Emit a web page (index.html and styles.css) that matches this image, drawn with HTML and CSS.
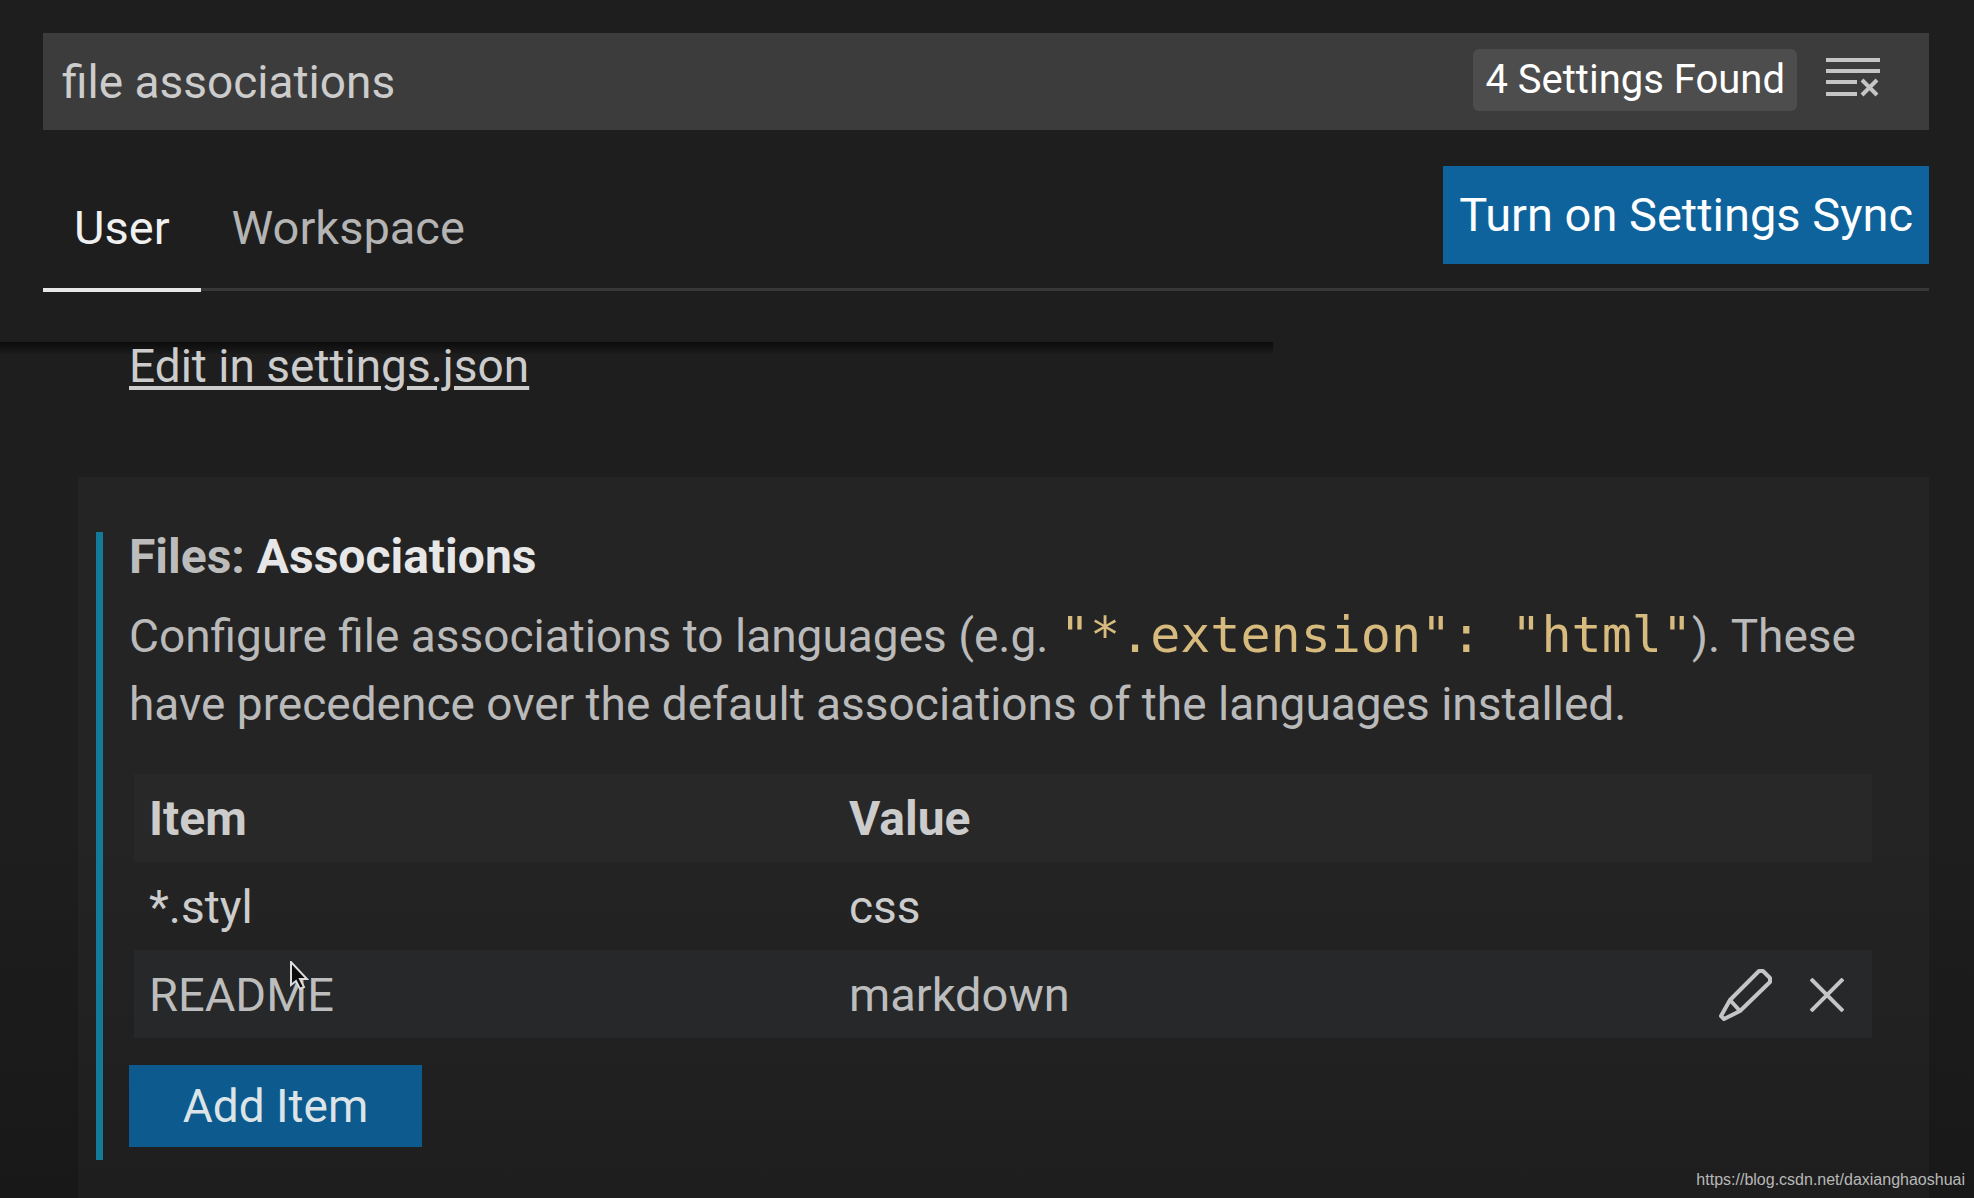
FILE: index.html
```html
<!DOCTYPE html>
<html lang="en">
<head>
<meta charset="utf-8">
<title>Settings</title>
<link rel="stylesheet" href="styles.css">
</head>
<body>
<header class="header">
  <div class="search">
    <input class="search-input" type="text" value="file associations" aria-label="Search settings">
    <span class="badge">4 Settings Found</span>
    <button class="icon-button clear" type="button" aria-label="Clear search results">
      <svg width="54" height="42" viewBox="0 0 54 42" fill="none" stroke="currentColor">
        <path d="M0 3h54M0 14h54M0 25h31M0 37h31" stroke-width="4"/>
        <path d="M36 23l15 15M51 23L36 38" stroke-width="4"/>
      </svg>
    </button>
  </div>
  <div class="toolbar">
    <nav class="tabs">
      <a class="tab active" href="#user">User</a>
      <a class="tab" href="#workspace">Workspace</a>
    </nav>
    <button class="button sync" type="button">Turn on Settings Sync</button>
  </div>
</header>
<main class="settings">
  <div class="previous"><a class="link" href="#json">Edit in settings.json</a></div>
  <section class="card">
    <div class="setting">
      <h2 class="title"><span class="category">Files:</span> Associations</h2>
      <p class="description">Configure file associations to languages (e.g. <code>"*.extension": "html"</code>). These have precedence over the default associations of the languages installed.</p>
      <table class="items">
        <thead>
          <tr><th class="key" scope="col">Item</th><th scope="col">Value</th></tr>
        </thead>
        <tbody>
          <tr><td>*.styl</td><td>css</td></tr>
          <tr class="hover">
            <td><span class="pointed">README<svg class="cursor" width="20" height="30" viewBox="0 0 20 30"><path d="M2 1v23l5-4 4 8 4-2-4-8h7z" fill="#0c0c0c" stroke="#dcdcdc" stroke-width="2"/></svg></span></td>
            <td>
              <div class="value">markdown
                <span class="actions">
                  <button class="icon-button" type="button" aria-label="Edit item">
                    <svg width="54" height="54" viewBox="0 0 54 54" fill="none" stroke="currentColor" stroke-width="4" stroke-linejoin="round">
                      <path d="M41 3h4l7 7v4L22 43 6 51l-3-3 9-16zM12 32l10 11"/>
                    </svg>
                  </button>
                  <button class="icon-button" type="button" aria-label="Remove item">
                    <svg width="34" height="34" viewBox="0 0 34 34" fill="none" stroke="currentColor" stroke-width="4">
                      <path d="M1 1l32 32M33 1L1 33"/>
                    </svg>
                  </button>
                </span>
              </div>
            </td>
          </tr>
        </tbody>
      </table>
      <button class="button add" type="button">Add Item</button>
    </div>
  </section>
</main>
<div class="watermark">https://blog.csdn.net/daxianghaoshuai</div>
</body>
</html>
```
FILE: styles.css
```css
* {
  box-sizing: border-box;
}

body {
  margin: 0;
  min-height: 100vh;
  display: flex;
  flex-direction: column;
  background: linear-gradient(#1e1e1e 70%, #181818);
  color: #cccccc;
  font: 46px/68px Roboto, Arial, sans-serif;
}

button,
input {
  margin: 0;
  padding: 0;
  border: 0;
  background: none;
  color: inherit;
  font: inherit;
}

svg {
  display: block;
}

.header {
  padding: 33px 45px 51px 43px;
}

.search {
  display: flex;
  align-items: center;
  height: 97px;
  padding: 0 49px 0 19px;
  background: #3c3c3c;
}

.search-input {
  flex: 1;
  min-width: 0;
  outline: none;
}

.badge {
  padding: 0 12px;
  border-radius: 6px;
  background: #4d4d4d;
  color: #ffffff;
  font-size: 40px;
  line-height: 62px;
  margin-bottom: 4px;
}

.clear {
  margin: 0 0 8px 29px;
}

.icon-button {
  color: #c5c5c5;
}

.toolbar {
  display: flex;
  justify-content: space-between;
  align-items: flex-start;
  margin-top: 36px;
  height: 125px;
  border-bottom: 3px solid #383838;
  font-size: 47px;
}

.tabs {
  display: flex;
}

.tab {
  height: 126px;
  padding: 28px 31px 0;
  color: #b4b4b4;
  text-decoration: none;
}

.tab.active {
  border-bottom: 4px solid #e7e7e7;
  color: #f0f0f0;
}

.button {
  background: #0e639c;
  color: #ffffff;
}

.sync {
  height: 98px;
  padding: 0 16px;
}

.settings {
  flex: 1;
  display: flex;
  flex-direction: column;
  padding: 0 45px 0 78px;
  background: linear-gradient(#0c0c0c, #1b1b1b) no-repeat 0 0 / 1273px 12px;
}

.previous {
  height: 135px;
  padding-left: 51px;
  line-height: 48px;
}

.link {
  color: #cccccc;
  text-decoration-thickness: 4px;
  text-underline-offset: 4px;
}

.card {
  flex: 1;
  padding: 55px 57px 38px 18px;
  background: linear-gradient(#242424 50%, #1e1e1e);
}

.setting {
  padding: 0 0 13px 26px;
  border-left: 7px solid #137b99;
}

.title {
  margin: 0;
  color: #e7e7e7;
  font-size: 48px;
  font-weight: 700;
  line-height: 50px;
}

.category {
  color: #bcbcbc;
}

.description {
  margin: 20px 0 36px;
  color: #bababa;
}

code {
  color: #d7ba7d;
  font: 50px/50px "DejaVu Sans Mono", monospace;
}

.items {
  width: calc(100% - 5px);
  margin-left: 5px;
  table-layout: fixed;
  border-collapse: collapse;
}

th,
td {
  height: 88px;
  padding: 2px 15px 0;
  text-align: left;
}

th {
  background: #282828;
  font-size: 48px;
  font-weight: 700;
}

.key {
  width: 700px;
}

.hover {
  background: #262829;
  color: #bdbdbd;
}

.hover td {
  font-size: 47px;
}

.pointed {
  position: relative;
}

.cursor {
  position: absolute;
  left: 140px;
  top: -6px;
}

.value {
  display: flex;
  justify-content: space-between;
}

.actions {
  display: flex;
  align-items: center;
  gap: 38px;
  padding-right: 13px;
}

.add {
  display: block;
  width: 293px;
  height: 82px;
  margin-top: 27px;
  background: #0c5a8e;
  color: #dce4e8;
}

.watermark {
  position: absolute;
  right: 9px;
  bottom: 8px;
  color: #b8b8b8;
  font: 16px/20px "Liberation Sans", sans-serif;
}
```
